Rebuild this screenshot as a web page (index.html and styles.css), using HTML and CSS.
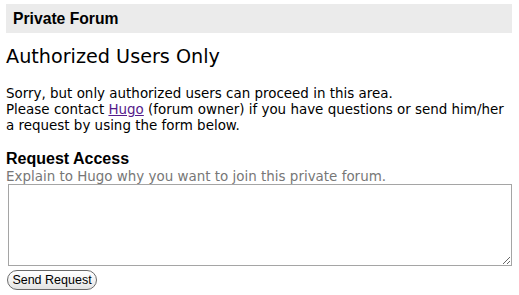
FILE: index.html
```html
<!DOCTYPE html>
<html>
<head>
<meta charset="utf-8">
<link rel="stylesheet" href="styles.css">
</head>
<body>
<div class="page">
  <div class="bar">Private Forum</div>
  <h1 class="title">Authorized Users Only</h1>
  <p class="msg">Sorry, but only authorized users can proceed in this area.<br>Please contact <a href="#">Hugo</a> (forum owner) if you have questions or send him/her a request by using the form below.</p>
  <h2 class="sub">Request Access</h2>
  <div class="hint">Explain to Hugo why you want to join this private forum.</div>
  <textarea class="box"></textarea>
  <button class="btn">Send Request</button>
</div>
</body>
</html>
```
FILE: styles.css
```css
html, body { margin: 0; padding: 0; background: #fff; }
.page {
  padding: 4px 7px 0 6px;
  font-family: "DejaVu Sans", Verdana, sans-serif;
  color: #000;
}
.bar {
  background: #ebebeb;
  height: 29px;
  box-sizing: border-box;
  padding: 6px 0 0 7px;
  font-family: "Liberation Sans", Arial, sans-serif;
  font-weight: bold;
  font-size: 15.7px;
  line-height: 18px;
}
.title {
  margin: 11px 0 0 0;
  font-weight: normal;
  font-size: 19.2px;
  line-height: 26px;
}
.msg {
  margin: 16px 0 0 0;
  font-size: 13.45px;
  line-height: 16px;
}
.msg a { color: #551a8b; }
.sub {
  margin: 15px 0 0 0;
  font-family: "Liberation Sans", Arial, sans-serif;
  font-weight: bold;
  font-size: 16px;
  line-height: 19px;
}
.hint {
  color: #777;
  font-size: 13.45px;
  padding-top: 1px;
  line-height: 15px;
}
.box {
  display: block;
  margin: 0 0 0 2px;
  width: 504px;
  height: 82px;
  box-sizing: border-box;
  border: 1px solid #a5a5a5;
  padding: 2px;
  resize: vertical;
}
.btn {
  display: block;
  margin: 4px 0 0 1px;
  height: 20px;
  width: 90px;
  padding: 0;
  border: 1px solid #6a6a6a;
  border-radius: 10px;
  background: linear-gradient(#ffffff, #f4f4f4 50%, #e2e2e2);
  font-family: "Liberation Sans", Arial, sans-serif;
  font-size: 12.5px;
  line-height: 18px;
  color: #000;
}
```
